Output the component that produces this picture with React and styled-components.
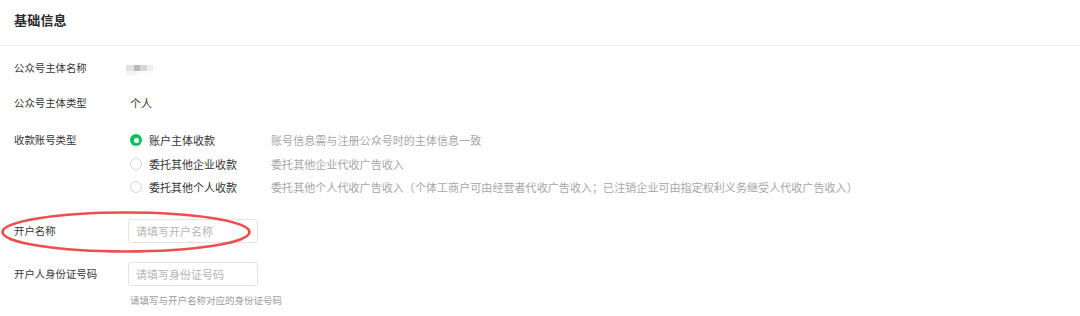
import React from "react";
import styled, { createGlobalStyle } from "styled-components";

const Global = createGlobalStyle`
  html, body { margin: 0; padding: 0; background: #fff; }
  body {
    font-family: "Noto Sans CJK SC", "Microsoft YaHei", "Noto Sans", sans-serif;
    color: #353535;
    -webkit-font-smoothing: antialiased;
  }
`;

const Page = styled.div`
  position: relative;
  width: 1080px;
  height: 316px;
  overflow: hidden;
`;

const Header = styled.div`
  height: 46px;
  display: flex;
  align-items: center;
  padding: 0 0 7px 14px;
  box-sizing: border-box;
  border-bottom: 1px solid #efefef;
`;

const Title = styled.h2`
  margin: 0;
  font-size: 13px;
  font-weight: 700;
  color: #2b2b2b;
  letter-spacing: 0.2px;
`;

const Form = styled.div`
  display: flex;
  flex-direction: column;
  padding: 12px 0 0 14px;
`;

const Row = styled.div`
  display: flex;
  align-items: ${(p) => (p.$top ? "flex-start" : "center")};
  margin-top: ${(p) => p.$mt || 0}px;
  min-height: 20px;
`;

const Label = styled.div`
  width: 115px;
  flex: none;
  font-size: 10.4px;
  line-height: ${(p) => p.$lh || 20}px;
  color: #353535;
`;

const Value = styled.div`
  font-size: 11px;
  line-height: 20px;
  color: #353535;
  padding-left: ${(p) => p.$pl || 0}px;
`;

const Blurred = styled.span`
  display: inline-block;
  margin-left: -3px;
  width: 27px;
  height: 10px;
  margin-top: 4px;
  background:
    linear-gradient(90deg, #e2e2e2 0 28%, #b9b9b9 28% 52%, #d6d6d6 52% 78%, #efefef 78% 100%) top / 100% 6px no-repeat,
    linear-gradient(90deg, #f2f2f2 0 40%, #fafafa 40% 100%) bottom / 100% 4px no-repeat;
  filter: blur(0.7px);
`;

const Options = styled.div`
  display: flex;
  flex-direction: column;
`;

const Option = styled.div`
  display: grid;
  grid-template-columns: 142px auto;
  align-items: center;
  height: ${(p) => p.$h || 24}px;
  font-size: 11px;
`;

const OptionMain = styled.div`
  display: flex;
  align-items: center;
  gap: 7px;
  color: #353535;
`;

const Radio = styled.span`
  width: 12px;
  height: 12px;
  box-sizing: border-box;
  border-radius: 50%;
  flex: none;
  margin-left: 1px;
  display: flex;
  align-items: center;
  justify-content: center;
  border: ${(p) => (p.$checked ? "none" : "1px solid #d6d6d6")};
  background: ${(p) => (p.$checked ? "#07c160" : "#fff")};
  &::after {
    content: "";
    display: ${(p) => (p.$checked ? "block" : "none")};
    width: 5px;
    height: 5px;
    border-radius: 50%;
    background: #fff;
  }
`;

const Desc = styled.div`
  color: #a6a6a6;
  white-space: nowrap;
  letter-spacing: 0.07px;
`;

const Field = styled.div`
  display: flex;
  flex-direction: column;
`;

const Input = styled.input`
  width: 130px;
  height: 24px;
  box-sizing: border-box;
  border: 1px solid #e3e3e3;
  border-radius: 3px;
  padding: 0 7px;
  margin-left: -1px;
  font-family: inherit;
  font-size: 11px;
  color: #353535;
  outline: none;
  &::placeholder { color: #b5b5b5; }
`;

const Hint = styled.div`
  font-size: 9.5px;
  line-height: 16px;
  margin-top: 6px;
  padding-left: 1px;
  color: #9b9b9b;
`;

const Mark = styled.svg`
  position: absolute;
  left: 0;
  top: 205px;
  width: 262px;
  height: 56px;
  pointer-events: none;
`;

export default function App() {
  const options = [
    { text: "账户主体收款", desc: "账号信息需与注册公众号时的主体信息一致", checked: true },
    { text: "委托其他企业收款", desc: "委托其他企业代收广告收入" },
    {
      text: "委托其他个人收款",
      desc: "委托其他个人代收广告收入（个体工商户可由经营者代收广告收入；已注销企业可由指定权利义务继受人代收广告收入）",
    },
  ];
  return (
    <Page>
      <Global />
      <Header>
        <Title>基础信息</Title>
      </Header>
      <Form>
        <Row>
          <Label>公众号主体名称</Label>
          <Blurred />
        </Row>
        <Row $mt={15}>
          <Label>公众号主体类型</Label>
          <Value $pl={1}>个人</Value>
        </Row>
        <Row $mt={15} $top>
          <Label $lh={24}>收款账号类型</Label>
          <Options>
            {options.map((o, i) => (
              <Option key={i} $h={i === 0 ? 24 : 23.5}>
                <OptionMain>
                  <Radio $checked={o.checked} />
                  <span>{o.text}</span>
                </OptionMain>
                <Desc>{o.desc}</Desc>
              </Option>
            ))}
          </Options>
        </Row>
        <Row $mt={20}>
          <Label>开户名称</Label>
          <Input placeholder="请填写开户名称" />
        </Row>
        <Row $mt={19} $top>
          <Label $lh={24}>开户人身份证号码</Label>
          <Field>
            <Input placeholder="请填写身份证号码" />
            <Hint>请填写与开户名称对应的身份证号码</Hint>
          </Field>
        </Row>
      </Form>
      <Mark viewBox="0 0 262 56">
        <ellipse cx="126" cy="27" rx="123.5" ry="19.5" fill="none" stroke="#ec4f4f" strokeWidth="2.7" />
      </Mark>
    </Page>
  );
}
